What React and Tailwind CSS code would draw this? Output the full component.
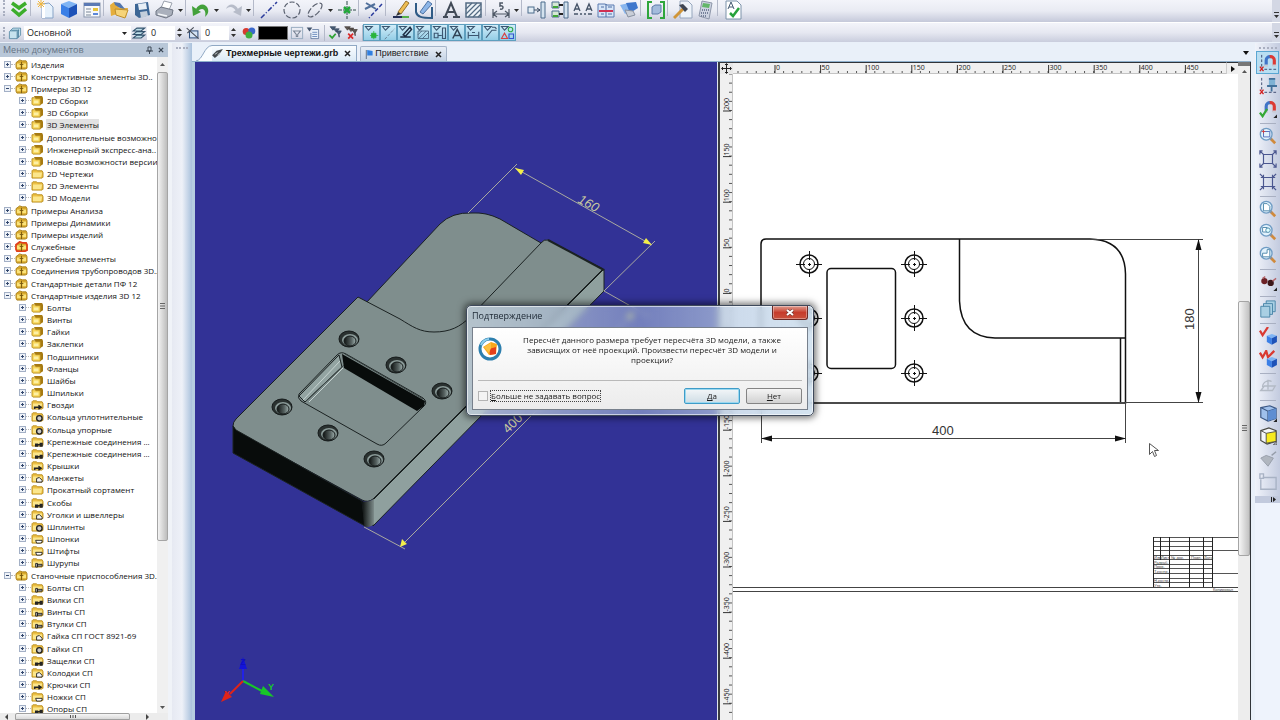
import React, { useState } from "react";
import clsx from "clsx";

const rootItems = [
  { name: "Изделия" },
  { name: "Конструктивные элементы 3D.." },
  {
    name: "Примеры 3D 12",
    children: [
      { name: "2D Сборки", icon: "box" },
      { name: "3D Сборки", icon: "box" },
      { name: "3D Элементы", icon: "box" },
      { name: "Дополнительные возможно", icon: "box" },
      { name: "Инженерный экспресс-ана..", icon: "box" },
      { name: "Новые возможности версии", icon: "box" },
      { name: "2D Чертежи", icon: "folder" },
      { name: "2D Элементы", icon: "folder" },
      { name: "3D Модели", icon: "folder" },
    ],
  },
  { name: "Примеры Анализа" },
  { name: "Примеры Динамики" },
  { name: "Примеры изделий" },
  { name: "Служебные", marked: true },
  { name: "Служебные элементы" },
  { name: "Соединения трубопроводов 3D.." },
  { name: "Стандартные детали ПФ 12" },
  {
    name: "Стандартные изделия 3D 12",
    children: [
      { name: "Болты", icon: "box" },
      { name: "Винты", icon: "box" },
      { name: "Гайки", icon: "box" },
      { name: "Заклепки", icon: "box" },
      { name: "Подшипники", icon: "box" },
      { name: "Фланцы", icon: "box" },
      { name: "Шайбы", icon: "box" },
      { name: "Шпильки", icon: "box" },
      { name: "Гвозди", icon: "nail" },
      { name: "Кольца уплотнительные", icon: "ring" },
      { name: "Кольца упорные", icon: "ring" },
      { name: "Крепежные соединения ...", icon: "joint" },
      { name: "Крепежные соединения ...", icon: "joint" },
      { name: "Крышки", icon: "nail" },
      { name: "Манжеты", icon: "part" },
      { name: "Прокатный сортамент", icon: "folder" },
      { name: "Скобы", icon: "joint" },
      { name: "Уголки и швеллеры", icon: "part" },
      { name: "Шплинты", icon: "ring" },
      { name: "Шпонки", icon: "key" },
      { name: "Штифты", icon: "key" },
      { name: "Шурупы", icon: "bolt" },
    ],
  },
  {
    name: "Станочные приспособления 3D.",
    children: [
      { name: "Болты СП", icon: "bolt" },
      { name: "Вилки СП", icon: "joint" },
      { name: "Винты СП", icon: "bolt" },
      { name: "Втулки СП", icon: "bolt" },
      { name: "Гайка СП ГОСТ 8921-69", icon: "part" },
      { name: "Гайки СП", icon: "ring" },
      { name: "Защелки СП", icon: "joint" },
      { name: "Колодки СП", icon: "part" },
      { name: "Крючки СП", icon: "nail" },
      { name: "Ножки СП", icon: "key" },
      { name: "Опоры СП", icon: "joint" },
    ],
  },
];

// flat list of the visible rows
const rows = rootItems.flatMap((item) => [
  { ...item, level: 0 },
  ...(item.children || []).map((child) => ({ ...child, level: 1 })),
]);

const Svg = ({ children, className = "size-5" }) => (
  <svg viewBox="0 0 20 20" fill="none" className={clsx("shrink-0", className)} aria-hidden="true">
    {children}
  </svg>
);

const Magnifier = ({ children }) => (
  <>
    <path d="M12.500 12.500L18 18" stroke="#d08a3c" strokeWidth="3" />
    <path d="M12 12l2 2" stroke="#8a8f9a" strokeWidth="2" />
    <circle cx="8" cy="8" r="6.500" fill="#e2f2fc" stroke="#6f9cc4" strokeWidth="1.500" />
    {children}
  </>
);

const Cube = ({ x = 0, y = 0, s = 1 }) => (
  <g transform={`translate(${x} ${y}) scale(${s})`}>
    <path d="M1 4L9 1l8 3-8 4z" fill="#7fb4f4" />
    <path d="M1 4l8 4v10l-8-4z" fill="#3a7fe6" />
    <path d="M17 4l-8 4v10l8-4z" fill="#1d52b8" />
  </g>
);

const Magnet = () => (
  <>
    <path d="M8 13V7a4 4 0 0 1 5-4" stroke="#3f74c8" strokeWidth="3.500" />
    <path d="M12 3a4 4 0 0 1 5 4v6" stroke="#dc3a34" strokeWidth="3.500" />
    <path d="M6 13h4M15 13h4" stroke="#c7ccd6" strokeWidth="2.500" />
  </>
);

const SnapAxes = () => (
  <path d="M3 1v14M6 17h14" stroke="#333f66" strokeWidth="1" strokeDasharray="3 2" />
);

const RedCross = () => <path d="M1 14l4 5M5 14l-4 5" stroke="#d22020" strokeWidth="1.500" />;

const icons = {
  chevrons: (
    <path d="M3 3l7 5 7-5M3 9l7 6 7-6" stroke="#3cae2c" strokeWidth="3.500" />
  ),
  newDoc: (
    <>
      <path d="M6 4l7-1 4 4v11H6z" fill="#e6f1fb" stroke="#87a3c6" />
      <path d="M6 4h3v14H6z" fill="#fff" />
      <path d="M5 0v8M1 4h8M2 1l6 6M8 1L2 7" stroke="#f0b53a" />
    </>
  ),
  cube: <Cube x={1} y={0} />,
  form: (
    <>
      <rect x="2" y="3" width="16" height="14" fill="#f6f8fb" stroke="#8795ac" />
      <path d="M2 3h16v3H2z" fill="#5a79b4" />
      <path d="M4 9h5M4 12h5M4 15h5" stroke="#7b8797" />
      <rect x="11" y="8" width="5" height="3" fill="#e6c33b" />
      <rect x="11" y="13" width="5" height="2" fill="#5b87d8" />
    </>
  ),
  open: (
    <>
      <path d="M1 5l4-3 4 3 1 3h9l-2 9-9-3-6 2z" fill="#e5ae3c" />
      <path d="M6 9l13 1-3 8-9-3z" fill="#f6d479" stroke="#c0902b" />
      <path d="M5 2l6 1 5 6-5-1-5-3z" fill="#5175ae" />
    </>
  ),
  save: (
    <>
      <path d="M3 4l13-2 2 13-11 3-4-3z" fill="#3c6695" />
      <path d="M6 4l8-1 1 6-8 1z" fill="#e8eff6" />
      <path d="M8 12l7-1 1 5-7 2z" fill="#c3cedb" />
    </>
  ),
  print: (
    <>
      <path d="M6 8l3-7 8 2-3 7z" fill="#fff" stroke="#9aa1ad" />
      <path d="M1 11l5-4 12 3-1 5-6 3-10-3z" fill="#aab0bc" stroke="#6f7683" />
      <path d="M3 14l9 2" stroke="#f2f4f7" strokeWidth="1.500" />
    </>
  ),
  undo: (
    <>
      <path d="M5 9C8 3 15 3 17 9c1 4-1 6-3 8 1-4 0-8-3-8-2 0-3 1-4 2" fill="#43a13a" />
      <path d="M1 6l1 10 8-4z" fill="#43a13a" />
    </>
  ),
  redo: (
    <>
      <path d="M15 9C12 3 5 3 3 9c3-3 7-3 10 2" fill="#b7bcc9" />
      <path d="M19 6l-1 10-8-4z" fill="#b7bcc9" />
    </>
  ),
  line: <path d="M2 18L18 2" stroke="#2b3c9c" strokeWidth="1.500" strokeDasharray="5 2 1 2" />,
  circle: <circle cx="10" cy="10" r="8" stroke="#5b6270" strokeWidth="1.200" strokeDasharray="5 2" />,
  ellipse: (
    <ellipse cx="10" cy="10" rx="9" ry="4" transform="rotate(-45 10 10)" stroke="#5c6270" strokeWidth="1.200" strokeDasharray="6 2" />
  ),
  node: (
    <>
      <path d="M10 1v18M1 10h18" stroke="#2c4b46" strokeDasharray="4 1" />
      <path d="M7 7l6 6M13 7l-6 6" stroke="#22a83a" strokeWidth="2.500" />
    </>
  ),
  trim: (
    <>
      <path d="M2 3l10 6M1 9l10-5" stroke="#51709b" strokeWidth="2" />
      <path d="M18 4L5 18" stroke="#2b3c9c" strokeWidth="1.500" strokeDasharray="4 2" />
    </>
  ),
  pencil: (
    <>
      <path d="M7 12L15 1l3 2-8 11z" fill="#eebd52" stroke="#96712c" />
      <path d="M7 12l3 2-5 2z" fill="#333" />
      <path d="M2 17h9" stroke="#222e55" strokeWidth="2" />
      <path d="M11 17h7" stroke="#54b04a" strokeWidth="2" />
    </>
  ),
  sketch: (
    <>
      <path d="M2 3v9c1 5 6 6 16 6V7" stroke="#2f5b86" strokeWidth="2" />
      <path d="M6 12L14 1l4 3-9 10z" fill="#8db6e8" stroke="#4e73a4" />
    </>
  ),
  textA: <path d="M2 17h5M12 17h7M4 17L10 3l6 14M7 12h7" stroke="#414a57" strokeWidth="2" />,
  hatch: (
    <>
      <rect x="2" y="3" width="15" height="14" fill="#edf3f8" stroke="#536b83" strokeWidth="1.500" />
      <path d="M2 9l6-6M2 14L13 3M4 17L17 4M9 17l8-8M14 17l3-3" stroke="#536b83" strokeWidth="1.200" />
    </>
  ),
  dimension: (
    <>
      <path d="M2 9v9M18 9v9M2 14h16M6 11l-4 3 4 3M14 11l4 3-4 3" stroke="#4e5866" strokeWidth="1.200" />
      <path d="M12 3H9v3c4-1 4 4 0 3" stroke="#4e5866" strokeWidth="1.500" />
    </>
  ),
  link: (
    <>
      <rect x="1" y="7" width="6" height="6" fill="#e3edf5" stroke="#4d6c8c" />
      <path d="M7 10h6M10 8l3 2-3 2" stroke="#394a60" />
      <path d="M14 2h4v16h-4z" fill="#d3e2ee" stroke="#4d6c8c" />
    </>
  ),
  linkGroup: (
    <>
      <path d="M2 2h7v6H2zM2 11h7v6H2z" fill="#d5e9d4" stroke="#4d6c8c" />
      <path d="M3 7h5M3 16h5" stroke="#41a637" strokeWidth="2" />
      <path d="M9 5h4M9 14h4" stroke="#222" strokeWidth="2" />
      <path d="M14 2h4v16h-4z" fill="#d3e2ee" stroke="#4d6c8c" />
    </>
  ),
  textLink: (
    <path d="M1 11l3-7 3 7M2 9h4M13 11l3-7 3 7M14 9h4M1 14h4M7 14h2M11 14h2M15 14h4" stroke="#465468" strokeWidth="1.300" />
  ),
  book: (
    <>
      <path d="M2 4h7l2 1h7v12H2z" fill="#d7e5f7" stroke="#5a7bb0" />
      <path d="M10 4v13M5 7h3M12 7h4M5 14h3M12 14h4" stroke="#4d6ca3" />
      <path d="M3 11h14" stroke="#d02f52" strokeWidth="2" />
    </>
  ),
  disks: (
    <>
      <path d="M1 5l9-2 3 8-7 3z" fill="#89b6ee" />
      <path d="M7 3l10-1 2 6-8 5z" fill="#3f77cc" />
      <path d="M6 10l8 1 2 4-7 2z" fill="#c9ced8" stroke="#8891a0" />
    </>
  ),
  bracket: (
    <>
      <path d="M6 2H2v16h4M14 2h4v16h-4" stroke="#2fa63c" strokeWidth="2" />
      <path d="M6 7l3-2h6v7l-3 2H6z" fill="#a3bbdc" stroke="#5d7ba8" />
    </>
  ),
  hammer: (
    <>
      <path d="M7 1h8l4 4v13H7z" fill="#eef3fa" stroke="#96a6bd" />
      <path d="M1 18l9-9" stroke="#d09538" strokeWidth="3" />
      <path d="M6 5l6 7 3-3-5-5z" fill="#3f4654" />
    </>
  ),
  calculator: (
    <>
      <path d="M6 1l10 2-3 16-10-3z" fill="#cdd3e1" stroke="#8d96a9" />
      <path d="M7 3l7 1-1 4-7-1z" fill="#63b66a" />
      <path d="M6 10h7M5 13h7M5 16h6" stroke="#76819a" strokeDasharray="1 1" strokeWidth="2" />
    </>
  ),
  checkDoc: (
    <>
      <path d="M3 1h11l4 4v14H3z" fill="#fff" stroke="#7d93aa" />
      <path d="M5 9l3-7 3 7M6 7h4" stroke="#445a71" />
      <path d="M7 13l3 3 6-8" stroke="#27a23b" strokeWidth="2.500" />
    </>
  ),
  layerBox: (
    <path d="M2 8l5-5h11v10l-5 5H2zM5 6h11M13 18V8M15 16V5M3 7h11v10" fill="#c7e2ee" stroke="#3f7796" />
  ),
  sheets: (
    <path d="M2 17h11l5-4H7zM2 12h11l5-4H7zM2 7h11l5-4H7z" fill="#bfe0ea" stroke="#34546f" strokeWidth="1.500" />
  ),
  priority: (
    <>
      <rect x="5" y="7" width="12" height="10" fill="#d4e3f4" stroke="#33527f" strokeWidth="1.500" />
      <path d="M1 3l17 15M2 10l9-8" stroke="#464b55" strokeWidth="1.500" />
    </>
  ),
  balls: (
    <>
      <circle cx="6" cy="8" r="5" fill="#d83b30" />
      <circle cx="14" cy="7" r="5" fill="#3a68cc" />
      <circle cx="10" cy="13" r="5" fill="#3fae3e" />
    </>
  ),
  filter: (
    <>
      <rect x="2" y="2" width="16" height="16" stroke="#9db0c3" strokeWidth="1.500" />
      <path d="M5 7h10l-4 5v3H9v-3z" stroke="#7a8595" strokeWidth="1.500" />
    </>
  ),
  filterList: (
    <>
      <path d="M1 2h8L5 8z" fill="#42526a" />
      <path d="M9 5h9v13H7V10" fill="#eaf1fa" stroke="#4a6590" />
      <path d="M9 9h7M9 12h7M9 15h7" stroke="#4168a9" />
    </>
  ),
  filterOk: (
    <>
      <path d="M3 1h8l-4 5zM8 4h8l-4 5zM12 7h7l-3 5v4l-1-4z" fill="#495d76" stroke="#33455c" />
      <path d="M2 13l4 4 5-6" stroke="#2fa334" strokeWidth="2.500" />
    </>
  ),
  filterNo: (
    <>
      <path d="M1 1h8L5 6zM6 3h8l-4 5zM11 5h8l-3 5v4l-1-4z" fill="#5c5450" stroke="#453e3b" />
      <path d="M6 11l7 7M13 11l-7 7" stroke="#d82a2a" strokeWidth="2.500" />
    </>
  ),
  magnetAxes: (
    <>
      <SnapAxes />
      <Magnet />
      <RedCross />
    </>
  ),
  pin: (
    <>
      <SnapAxes />
      <path d="M11 2h7v7h-7z" fill="#7fb2d4" />
      <path d="M11 2h7M9 10h11M14 10v6" stroke="#41719b" strokeWidth="2" />
      <RedCross />
    </>
  ),
  magnetOk: (
    <>
      <Magnet />
      <path d="M1 14l3 4 5-8" stroke="#35a936" strokeWidth="2.500" />
      <path d="M20 16v4h-4z" fill="#222" />
    </>
  ),
  zoomFrame: (
    <Magnifier>
      <path d="M5 5h7v6H5z" stroke="#4a65b8" />
      <path d="M3 5h4M5 3v4" stroke="#d04040" />
    </Magnifier>
  ),
  expand: (
    <path d="M5 5h10v10H5zM5 5L1 1M15 5l4-4M5 15l-4 4M15 15l4 4M1 5V1h3M16 1h3v4M1 15v4h3M19 15v4h-3" stroke="#4b5790" strokeWidth="1.300" />
  ),
  shrink: (
    <path d="M5 5h10v10H5zM1 1l4 4M19 1l-4 4M1 19l4-4M19 19l-4-4M2 5h3V2M15 2v3h3M2 15h3v3M18 15h-3v3" stroke="#4b5790" strokeWidth="1.300" />
  ),
  zoomPage: (
    <Magnifier>
      <path d="M5 4h4l3 3v5H5z" fill="#fff" stroke="#4a85a8" />
    </Magnifier>
  ),
  zoomObjects: (
    <Magnifier>
      <path d="M4 5h5v5H4z" fill="#fff" stroke="#4a85a8" />
      <circle cx="10" cy="8" r="2.500" fill="#dff" stroke="#4a85a8" />
    </Magnifier>
  ),
  zoomPrev: (
    <Magnifier>
      <path d="M9 4h3v8H4V8h5z" fill="#fff" stroke="#4a85a8" />
    </Magnifier>
  ),
  glasses: (
    <>
      <circle cx="6" cy="9" r="3.500" fill="#6b2025" />
      <circle cx="13" cy="11" r="3.500" fill="#3c1719" />
      <path d="M4 6l3-2M15 9l4-3" stroke="#b4656a" strokeWidth="1.500" />
      <path d="M20 16v4h-4z" fill="#222" />
    </>
  ),
  stack: (
    <>
      <path d="M8 1h10v12H8z" fill="#a9cfe3" stroke="#4582a6" />
      <path d="M5 4h10v12H5z" fill="#a9cfe3" stroke="#4582a6" />
      <path d="M2 7h10v12H2z" fill="#a9cfe3" stroke="#4582a6" />
    </>
  ),
  cubeCheck: (
    <>
      <path d="M1 4l3 5L10 0" stroke="#d93a32" strokeWidth="2.500" />
      <Cube x={8} y={7} s={0.7} />
    </>
  ),
  cubeChecks: (
    <>
      <path d="M1 3l3 5 4-7 2 7 7-7" stroke="#d93a32" strokeWidth="2.500" />
      <Cube x={8} y={7} s={0.7} />
    </>
  ),
  plane: (
    <path d="M2 15l4-5h12l-3 5zM4 11c0-6 7-8 10-6M10 14V3" stroke="#b3bac5" strokeWidth="1.500" />
  ),
  wireCube: (
    <>
      <path d="M2 4l10-2 7 3v11l-9 3-8-4z" fill="#9fc0ec" stroke="#3b5784" strokeWidth="1.300" />
      <path d="M2 4l8 4 9-3M10 8v11" stroke="#3b5784" strokeWidth="1.300" />
      <path d="M10 8l9-3v11l-9 3z" fill="#5f8ed2" />
      <path d="M20 16v4h-4z" fill="#222" />
    </>
  ),
  yellowCube: (
    <>
      <path d="M2 4l9-3 8 3v12l-10 3-7-4z" fill="#f4f6f9" stroke="#4a4a44" strokeWidth="1.300" />
      <path d="M8 7l11-2v11L8 18z" fill="#f7ea1e" stroke="#4a4a44" />
      <path d="M2 4l6 3M20 16v4h-4z" stroke="#4a4a44" />
    </>
  ),
  grayBody: (
    <>
      <path d="M2 9l6-3 8 3-6 9z" fill="#b0b6bf" stroke="#959ca8" />
      <path d="M14 6l5-4" stroke="#959ca8" strokeWidth="1.500" />
    </>
  ),
  frame: (
    <path d="M4 5h15v13H2V7M1 1h4v5H1z" stroke="#a8b2c4" strokeWidth="1.500" />
  ),
};

const mainTools = [
  ["chevrons", "Завершить"], "sep",
  ["newDoc", "Новый чертеж"], ["cube", "Новая 3D модель"], ["form", "Новый документ"], "sep",
  ["open", "Открыть"], ["save", "Сохранить"], ["print", "Печать"], "more", "sep",
  ["undo", "Отменить"], "more", ["redo", "Повторить"], "more", "sep",
  ["line", "Прямая"], ["circle", "Окружность"], ["ellipse", "Эллипс"], "more", ["node", "Узел"], "sep",
  ["trim", "Обрезка"], "sep",
  ["pencil", "Изображение"], ["sketch", "Эскиз"], "sep",
  ["textA", "Текст"], ["hatch", "Штриховка"], "sep",
  ["dimension", "Размер"], "more", "sep",
  ["link", "Связь"], ["linkGroup", "Группа связей"], ["textLink", "Связь текста"], ["book", "Библиотека"], ["disks", "База данных"], "sep",
  ["bracket", "Фрагмент"], "sep",
  ["hammer", "Настройка"], ["calculator", "Калькулятор"], "sep",
  ["checkDoc", "Проверка"],
];

const sideTools = [
  ["magnetAxes", "Привязки"], ["pin", "Закрепить"], ["magnetOk", "Объектная привязка"], "sep",
  ["zoomFrame", "Показать рамкой"], ["expand", "Увеличить"], ["shrink", "Уменьшить"], "sep",
  ["zoomPage", "Показать страницу"], ["zoomObjects", "Показать объекты"], ["zoomPrev", "Предыдущий вид"], "sep",
  ["glasses", "Видимость"], "sep",
  ["stack", "Слои"], "sep",
  ["cubeCheck", "Пересчитать"], ["cubeChecks", "Полный пересчет"], "sep",
  ["plane", "Рабочая плоскость"], "sep",
  ["wireCube", "Прозрачность"], ["yellowCube", "Закраска"], ["grayBody", "Тело"], ["frame", "Рамка"],
];

const selectors = [
  ["Узлы", <path key="a" d="M10 11h6v6h-6zM13 8v11M8 14h11" fill="#28b43c" stroke="#28b43c" />],
  ["Линии", <path key="b" d="M5 19L18 5" stroke="#5b6e80" strokeDasharray="4 2" />],
  ["Изображения", <path key="c" d="M3 16h14M7 13L16 3l2 3-8 9z" stroke="#1d2d44" strokeWidth="2" />],
  ["Штриховки", <path key="d" d="M4 8h14v10H4zM4 13l5-5M5 18L15 8M10 18l8-8" stroke="#3b5670" />],
  ["Связи", <path key="e" d="M3 11h5v6H3zM8 14h5M14 4h4v14h-4z" stroke="#3b5670" strokeWidth="1.500" />],
  ["Тексты", <path key="f" d="M5 18l6-12 6 12M7 14h8" stroke="#2f4355" strokeWidth="2" />],
  ["Размеры", <path key="g" d="M3 9v9M17 9v9M3 14h14M8 10h4" stroke="#3b5670" strokeWidth="1.500" />],
  ["Надписи", <path key="h" d="M4 17L12 7h6M12 3h4l2 2" stroke="#3b5670" strokeWidth="1.500" />],
  [
    "Операции",
    <g key="i" strokeWidth="1.500">
      <circle cx="14" cy="6" r="3" stroke="#2fa848" />
      <path d="M2 18l4-7 4 7z" stroke="#d84040" />
      <path d="M12 12h6v6h-6z" stroke="#3355d0" />
    </g>,
  ],
];

const Separator = () => <span className="h-4 w-1 shrink-0 border-l border-[#b4b9c9]" />;

const DropArrow = ({ label }) => (
  <button aria-label={label} className="flex h-5 w-[9px] items-center justify-center">
    <svg viewBox="0 0 5 3" className="w-[5px]">
      <path d="M0 0h5L2.500 3z" fill="#2b2b2b" />
    </svg>
  </button>
);

const ToolbarEnd = () => (
  <span className="ml-auto flex h-full w-2 items-end justify-center bg-[#d3d7e4] pb-1">
    <svg viewBox="0 0 5 6" className="w-[5px]">
      <path d="M0 0h5v1H0zM0 3h5L2.500 6z" fill="#333" />
    </svg>
  </span>
);

const MainToolbar = () => (
  <div className="flex h-[23px] shrink-0 items-start border-b border-white bg-linear-to-b from-[#f3f4fa] via-[#e9ebf3] to-[#c5c9da] pl-[3px]">
    <span className="mr-[2px] h-4 w-[2px] border-l-2 border-dotted border-[#a9afc0]" />
    {mainTools.map((tool, index) => {
      if (tool === "sep") return <Separator key={index} />;
      if (tool === "more") return <DropArrow key={index} label="Ещё" />;
      return (
        <button key={index} aria-label={tool[1]} className="flex w-[23px] justify-center">
          <Svg>{icons[tool[0]]}</Svg>
        </button>
      );
    })}
    <ToolbarEnd />
  </div>
);

const Spinner = () => (
  <svg viewBox="0 0 5 9" className="mx-[2px] w-[5px] shrink-0" aria-hidden="true">
    <path d="M0 3h5L2.500 0zM0 6h5L2.500 9z" fill="#333" />
  </svg>
);

const LayerToolbar = () => (
  <div className="flex h-[19px] shrink-0 items-center bg-linear-to-b from-[#f3f4fa] via-[#e6e8f1] to-[#c9cddd] pl-[3px] text-[9px] text-[#222] [font-family:'Open_Sans','Noto_Sans',sans-serif]">
    <span className="mr-[3px] h-3 w-[2px] border-l-2 border-dotted border-[#a9afc0]" />
    <Svg className="size-[14px]">{icons.layerBox}</Svg>
    <div className="relative ml-[2px] flex w-[107px]">
      <select aria-label="Слой" className="h-[14px] w-full appearance-none bg-white px-[3px] leading-[14px] outline-none">
        <option>Основной</option>
      </select>
      <svg viewBox="0 0 5 3" className="pointer-events-none absolute top-[6px] right-1 w-[5px]">
        <path d="M0 0h5L2.500 3z" fill="#222" />
      </svg>
    </div>
    <Svg className="ml-px size-[14px]">{icons.sheets}</Svg>
    <input aria-label="Уровень" defaultValue="0" className="ml-px h-[14px] w-7 bg-white px-1 outline-none" />
    <Spinner />
    <Svg className="ml-[2px] size-[14px]">{icons.priority}</Svg>
    <input aria-label="Приоритет" defaultValue="0" className="ml-px h-[14px] w-7 bg-white px-1 outline-none" />
    <Spinner />
    <button aria-label="Цвет" className="ml-1 flex">
      <Svg className="size-[14px]">{icons.balls}</Svg>
    </button>
    <button aria-label="Текущий цвет" className="ml-[2px] h-[14px] w-[30px] border border-[#777] bg-black" />
    <button aria-label="Фильтр" className="ml-[2px] flex">
      <Svg className="size-[14px]">{icons.filter}</Svg>
    </button>
    <button aria-label="Список фильтров" className="mr-1 ml-[2px] flex">
      <Svg className="size-[14px]">{icons.filterList}</Svg>
    </button>
    <Separator />
    <button aria-label="Включить все" className="flex">
      <Svg className="size-[14px]">{icons.filterOk}</Svg>
    </button>
    <button aria-label="Выключить все" className="mr-1 ml-[2px] flex">
      <Svg className="size-[14px]">{icons.filterNo}</Svg>
    </button>
    <span className="h-4 w-px shrink-0 bg-[#b4b9c9]" />
    {selectors.map(([label, glyph]) => (
      <button
        key={label}
        aria-label={label}
        className="flex h-[17px] w-[17px] items-center justify-center border border-[#5e9fbe] bg-linear-to-b from-[#d2edf9] to-[#93cde6]"
      >
        <Svg className="size-[15px]">
          <path d="M2 2h9L6 7z" stroke="#3b5670" strokeWidth="1.500" />
          {glyph}
        </Svg>
      </button>
    ))}
    <ToolbarEnd />
  </div>
);

const RootFolder = ({ marked }) => (
  <svg viewBox="0 0 14 12" className="h-[11px] w-[13px] shrink-0" aria-hidden="true">
    <path d="M1 4l4-3 3 1h4l1 2v6l-2 1H2L1 9z" fill="#d9a92c" stroke={marked ? "#e0401c" : "#a9801c"} strokeWidth={marked ? 2 : 1} />
    <path d="M2 5h4v4H2zM8 5h4v4H8z" fill="#fbe37a" />
    <path d="M7 3v8M5 6h4" stroke="#77590f" />
  </svg>
);

const partMarks = {
  nail: <path d="M3 9h7M4 9v2M8 7l3 2-3 2" stroke="#222" strokeWidth="1.500" fill="none" />,
  ring: <circle cx="9" cy="8" r="3" stroke="#222" strokeWidth="1.500" fill="#c9c9c9" />,
  joint: <path d="M5 9h2v2H5zM10 8h2v3h-2zM6 9l5 1" stroke="#222" strokeWidth="1.500" fill="#333" />,
  part: <path d="M6 11V7l3-1 3 3v2z" stroke="#222" fill="#f4f4f4" />,
  key: <path d="M5 8h7v2l-2 1H6z" stroke="#222" fill="#fff" />,
  bolt: <path d="M5 7h2v4H5zM7 8h5v2H7z" stroke="#222" fill="#b5b5b5" />,
};

const ChildFolder = ({ icon }) => (
  <svg viewBox="0 0 14 12" className="h-[11px] w-[13px] shrink-0" aria-hidden="true">
    {icon === "box" ? (
      <>
        <path d="M3 1h9l1 2v6l-3 2z" fill="#a67a12" />
        <path d="M1 3h3l1 1h5v7H2L1 10z" fill="#f8d65a" stroke="#b88c1e" />
        <path d="M3 6h5v3H3z" fill="#fdf0a4" />
      </>
    ) : (
      <>
        <path d="M1 3l1-1h4l1 1h5l1 2v5l-1 1H1z" fill="#edc044" stroke="#b88c1e" />
        <path d="M2 5h10l-1 5H2z" fill="#fbe68c" />
        {partMarks[icon]}
      </>
    )}
  </svg>
);

const Grip = () => (
  <svg viewBox="0 0 5 7" className="h-[7px] w-[5px]" stroke="#666">
    <path d="M0 .5h5M0 3h5M0 5.500h5" />
  </svg>
);

const ScrollArrow = ({ d, className }) => (
  <button aria-label="Прокрутка" className={clsx("flex w-full shrink-0 items-center justify-center", className)}>
    <svg viewBox="0 0 5 3" className="w-[5px]">
      <path d={d} fill="#555" />
    </svg>
  </button>
);

const DocumentTree = () => {
  const [selected, setSelected] = useState("3D Элементы");

  return (
    <aside className="flex w-[168px] shrink-0 flex-col bg-white">
      <div className="flex h-[14px] shrink-0 items-center bg-[#b8c7d8] pr-1 pl-[3px] text-[9px] text-[#657484] [font-family:'Open_Sans','Noto_Sans',sans-serif]">
        <h2 className="flex-1">Меню документов</h2>
        <button aria-label="Закрепить панель" className="mr-[5px]">
          <svg viewBox="0 0 7 8" className="w-[7px]" fill="none" stroke="#3c4856">
            <path d="M2 1h3v4H2zM0 5h7M3.500 5v3" />
          </svg>
        </button>
        <button aria-label="Закрыть панель">
          <svg viewBox="0 0 7 7" className="w-[6px]" fill="none" stroke="#3c4856" strokeWidth="1.500">
            <path d="M1 1l5 5M6 1L1 6" />
          </svg>
        </button>
      </div>
      <div className="flex min-h-0 flex-1">
        <ul className="grid h-[658px] min-w-0 flex-1 auto-rows-fr overflow-hidden pt-px text-[8px] leading-[11px] whitespace-nowrap text-[#111] [font-family:'Open_Sans','Noto_Sans',sans-serif]">
          {rows.map((row, index) => (
            <li key={index} className={clsx("flex min-h-0 min-w-0 items-center", row.level ? "pl-[19px]" : "pl-1")}>
              <button
                aria-label={row.children ? "Свернуть" : "Развернуть"}
                className="flex size-[7px] shrink-0 items-center justify-center border border-[#a3b0c6] bg-[#eef2f8]"
              >
                <svg viewBox="0 0 5 5" className="size-[5px]" stroke="#33486e">
                  <path d={row.children ? "M1 2.500h3" : "M1 2.500h3M2.500 1v3"} />
                </svg>
              </button>
              <span className={clsx("h-px shrink-0 border-t border-dotted border-[#b9b9b9]", row.level ? "w-[5px]" : "w-1")} />
              {row.level ? <ChildFolder icon={row.icon} /> : <RootFolder marked={row.marked} />}
              <button
                onClick={() => setSelected(row.name)}
                className={clsx(
                  "ml-[2px] shrink-0 pl-px text-left",
                  row.level && selected === row.name && "bg-[#e2e2e2]"
                )}
              >
                {row.name}
              </button>
            </li>
          ))}
        </ul>
        <div className="flex w-[11px] shrink-0 flex-col bg-[#f0f0f0]">
          <ScrollArrow d="M0 3h5L2.500 0z" className="h-[15px]" />
          <div className="flex h-[469px] items-center justify-center rounded-[2px] border border-[#a5a5a5] bg-linear-to-r from-[#f4f4f4] to-[#bdbdbd]">
            <Grip />
          </div>
          <div className="flex-1" />
          <ScrollArrow d="M0 0h5L2.500 3z" className="h-[11px]" />
        </div>
      </div>
      <div className="flex h-[7px] shrink-0 bg-[#ececec] pl-1">
        <svg viewBox="0 0 4 6" className="mt-px mr-[7px] h-[6px] w-1">
          <path d="M4 0v6L1 3z" fill="#444" />
        </svg>
        <div className="flex w-[115px] justify-center rounded-t-[2px] border border-[#a0a0a0] bg-linear-to-b from-[#f6f6f6] to-[#d9d9d9]">
          <svg viewBox="0 0 6 4" className="h-1 w-[6px]" stroke="#555">
            <path d="M.5 1v3M3 1v3M5.500 1v3" />
          </svg>
        </div>
        <svg viewBox="0 0 4 6" className="mt-px ml-4 h-[6px] w-1">
          <path d="M0 0v6l3-3z" fill="#444" />
        </svg>
      </div>
    </aside>
  );
};

const CloseMark = ({ label }) => (
  <button aria-label={label} className="ml-[6px]">
    <svg viewBox="0 0 7 7" className="w-[7px]" fill="none" stroke="#222" strokeWidth="1.500">
      <path d="M1 1l5 5M6 1L1 6" />
    </svg>
  </button>
);

const Tabs = () => (
  <div className="flex h-[19px] shrink-0 items-end border-b border-[#8fb0cc] bg-[#e9f0f9] pl-1 text-[9px] [font-family:'Liberation_Sans',Arial,sans-serif]">
    <svg viewBox="0 0 16 16" className="h-4 w-4 shrink-0">
      <path d="M0 16C7 15 8 1 16 .5V16z" fill="#fafdff" />
      <path d="M0 16C7 15 8 1 16 .5" fill="none" stroke="#8fa8c4" />
    </svg>
    <div className="flex h-4 items-center border-t border-r border-[#8fa8c4] bg-linear-to-b from-[#fafdff] to-[#dbeaf6] pr-[5px]">
      <svg viewBox="0 0 12 10" className="h-[9px] w-[11px]">
        <path d="M0 7l5-5 7-2-4 6-5 4z" fill="#42484c" />
        <path d="M3 6l3-2M6 7l3-3" stroke="#cfd6d8" />
      </svg>
      <button className="ml-[3px] font-bold text-[#111]">Трехмерные чертежи.grb</button>
      <CloseMark label="Закрыть чертеж" />
    </div>
    <div className="ml-[3px] flex h-[15px] items-center rounded-t-[2px] border border-b-0 border-[#a5b4c8] bg-linear-to-b from-[#e8eef6] to-[#c3d2e4] px-1">
      <svg viewBox="0 0 8 10" className="h-[9px] w-2">
        <path d="M1 0v10" stroke="#55657a" />
        <path d="M2 0l6 1v5L2 6z" fill="#2f7fe0" />
      </svg>
      <button className="ml-[2px] text-[#222]">Приветствие</button>
      <CloseMark label="Закрыть приветствие" />
    </div>
    <button aria-label="Список вкладок" className="mr-[2px] mb-[6px] ml-auto">
      <svg viewBox="0 0 6 4" className="w-[6px]">
        <path d="M0 0h6L3 4z" fill="#111" />
      </svg>
    </button>
  </div>
);

const modelHoles = [
  [349, 339], [396, 365], [442, 391], [282, 407], [328, 433], [374, 459],
];

const ModelView = () => (
  <svg viewBox="195 62 522 658" preserveAspectRatio="xMinYMin slice" className="h-full min-w-0 flex-1 bg-[#323296]">
    <defs>
      <linearGradient id="corner" x1="0" x2="1">
        <stop offset="0" stopColor="#0a0e0d" />
        <stop offset="1" stopColor="#7d8b8a" />
      </linearGradient>
      <linearGradient id="bore" x1="0" x2="1">
        <stop offset="0" stopColor="#0e1211" />
        <stop offset="0.600" stopColor="#55605f" />
        <stop offset="1" stopColor="#9fb0ae" />
      </linearGradient>
    </defs>

    {/* faces */}
    <g stroke="#1b2222" strokeLinejoin="round">
      <path d="M366 303L440 224Q452 212 472 213Q486 212 500 219L541 243L560 330L430 340z" fill="#7f8e8d" />
      <path d="M233 426Q233 422 236 419L358 297L400 319C413 327 420 332 434 332C450 332 460 327 470 317L541 243Q544 239 548 240L603 269L373 499Q368 503 362 500L236 431z" fill="#7f8e8d" />
      <path d="M373 500L604 269V291L373 526z" fill="#8fa09e" />
      <path d="M233 426L236 430L362 501L365 526L233 453z" fill="#080c0b" />
      <path d="M362 501Q368 503 374 499V524Q369 529 364 526z" fill="url(#corner)" stroke="none" />
      <path d="M548 240L604 270" strokeWidth="2" />
    </g>

    {/* pocket */}
    <g strokeLinejoin="round">
      <path d="M299 394L337 355Q341 351 346 354L423 398Q428 402 424 406L386 443Q382 447 377 444L301 401Q297 398 299 394z" fill="#7f8e8d" stroke="#1b2222" />
      <path d="M342 354L425 401L424 406L417 411L344 368z" fill="#080c0b" />
      <path d="M299 396L339 355L342 367L305 402z" fill="#93a4a2" stroke="#1b2222" />
      <path d="M303 400L340 361M309 402L343 368" stroke="#c6d3d1" />
      <path d="M306 401L344 365M345 354L423 399" stroke="#3a4443" fill="none" />
    </g>

    {modelHoles.map(([x, y]) => (
      <g key={`${x}-${y}`}>
        <ellipse cx={x} cy={y} rx="10" ry="8" fill="#2a3130" stroke="#151a1a" />
        <ellipse cx={x + 1} cy={y + 1} rx="8" ry="6" fill="#8a9a98" />
        <ellipse cx={x + 1} cy={y + 2} rx="6" ry="5" fill="url(#bore)" stroke="#151a1a" />
      </g>
    ))}

    {/* dimensions */}
    <g stroke="#a9a9a0" strokeWidth="1">
      <path d="M468 213L517 164M604 291L655 241M515 168L652 245M604 291L650 317M364 527L405 549M400 547L634 313" fill="none" />
    </g>
    <g fill="#f3ee4a">
      <path d="M515 168l9 2-3 5zM652 245l-9-2 3-5zM400 547l2-8 5 5zM634 313l-8 2 5 5z" />
    </g>
    <g fill="#c9c9a0" fontSize="13" className="[font-family:'Liberation_Sans',Arial,sans-serif]">
      <text transform="translate(577 202) rotate(29)" fontStyle="italic">160</text>
      <text transform="translate(508 434) rotate(-45)">400</text>
    </g>

    {/* axes */}
    <g strokeWidth="2">
      <path d="M243 681V668" stroke="#2222e8" />
      <path d="M243 681l19 10" stroke="#18c828" />
      <path d="M243 681l-13 13" stroke="#e02418" />
      <path d="M239 669l4-12 4 12z" fill="#1414d8" />
      <path d="M263 686l11 11-14-3z" fill="#18c828" />
      <path d="M221 702l5-11 6 6z" fill="#e02418" />
    </g>
    <g fontSize="9" fontWeight="bold" className="[font-family:'Liberation_Sans',Arial,sans-serif]">
      <text x="240" y="665" fill="#1010c0">Z</text>
      <text x="268" y="690" fill="#18c828">Y</text>
      <text x="224" y="697" fill="#e02418">X</text>
    </g>
  </svg>
);

const hTicks = [0, 50, 100, 150, 200, 250, 300, 350, 400, 450];
const vTicks = [200, 150, 100, 50, 0, -50, -100, -150, -200, -250, -300, -350, -400, -450];
// one division is 50 units, 456/10 px on screen
const STEP = 456 / 10;

const HorizontalRuler = () => (
  <svg viewBox="733 62 493 12" preserveAspectRatio="xMinYMin slice" className="h-3 w-full bg-[#f0f0f0]">
    <path d="M733 62.500h493" stroke="#303338" />
    {Array.from({ length: 54 }, (_, i) => (
      <path key={i} d={`M${738 + (i * STEP) / 5} 71v2`} stroke="#555" />
    ))}
    {hTicks.map((value, i) => (
      <g key={value}>
        <path d={`M${775 + i * STEP} 65v8`} stroke="#333" />
        <text x={776 + i * STEP} y="70" fontSize="7" fill="#222" className="[font-family:'Open_Sans','Noto_Sans',sans-serif]">
          {value}
        </text>
      </g>
    ))}
    <path d="M733 73.500h493" stroke="#c4c4c4" />
  </svg>
);

const VerticalRuler = () => (
  <svg viewBox="720 74 13 646" preserveAspectRatio="xMinYMin slice" className="h-full w-[13px] bg-[#f0f0f0]">
    {Array.from({ length: 71 }, (_, i) => (
      <path key={i} d={`M729 ${74 + (i * STEP) / 5}h3`} stroke="#555" />
    ))}
    {vTicks.map((value, i) => (
      <g key={value}>
        <path d={`M723 ${111 + i * STEP}h8`} stroke="#333" />
        <text
          transform={`translate(729 ${110 + i * STEP}) rotate(-90)`}
          fontSize="7"
          fill="#222"
          className="[font-family:'Open_Sans','Noto_Sans',sans-serif]"
        >
          {value}
        </text>
      </g>
    ))}
    <path d="M732.500 74v646" stroke="#c4c4c4" />
  </svg>
);

const planHoles = [
  [809, 264], [914, 264], [809, 318], [914, 318], [809, 373], [914, 373],
];

const Drawing = () => (
  <svg viewBox="733 74 505 646" preserveAspectRatio="xMinYMin slice" className="h-full w-full bg-white" fill="none">
    <g stroke="#111" strokeWidth="1.500">
      <path d="M761 403V244Q761 239 766 239H1090Q1125 240 1125.500 274V403z" />
      <path d="M959.500 239V301Q961 337 995 338H1125" />
      <rect x="827" y="268.500" width="68.500" height="100" rx="4" />
    </g>
    <path d="M1120.500 338v64" stroke="#111" strokeWidth="1.500" />

    {planHoles.map(([x, y]) => (
      <g key={`${x}-${y}`} stroke="#111">
        <circle cx={x} cy={y} r="9" strokeWidth="1.500" />
        <circle cx={x} cy={y} r="5.500" />
        <path d={`M${x - 13} ${y + 0.5}h9M${x - 1} ${y + 0.5}h3M${x + 5} ${y + 0.5}h8M${x + 0.5} ${y - 13}v9M${x + 0.5} ${y - 1}v3M${x + 0.5} ${y + 5}v8`} />
      </g>
    ))}

    {/* dimensions */}
    <path d="M1090 239.500H1203M1125 402.500H1203M1198.500 239V403M761.500 403V443M1125.500 403V443M761 438.500H1126" stroke="#444" />
    <path d="M1198.500 239l3 11h-6zM1198.500 403l3-11h-6zM761 438.500l11-3v6zM1126 438.500l-11-3v6z" fill="#111" />
    <g fill="#333" fontSize="13" className="[font-family:'Liberation_Sans',Arial,sans-serif]">
      <text x="932" y="435">400</text>
      <text transform="translate(1194 330) rotate(-90)">180</text>
    </g>

    {/* sheet frame and title block */}
    <path d="M733 587.500H1238M733 591.500H1238" stroke="#444" />
    <path
      d="M1153 537.500H1238M1212 550.500H1238M1212 573.500H1238M1153 541.500h60M1153 546.500h60M1153 550.500h60M1153 555.500h60M1153 559.500h60M1153 564.500h60M1153 568.500h60M1153 573.500h60M1153 578.500h60M1153 582.500h60"
      stroke="#555"
    />
    <path d="M1153.500 537v50M1160.500 537v23M1169.500 537v50M1189.500 537v50M1203.500 537v50M1212.500 537v50" stroke="#222" />
    <g fill="#444" fontSize="4" className="[font-family:'Liberation_Sans',Arial,sans-serif]">
      <text x="1154" y="559">Изм</text>
      <text x="1161" y="559">Лист</text>
      <text x="1171" y="559">№ док.</text>
      <text x="1191" y="559">Подп.</text>
      <text x="1204" y="559">Дата</text>
      <text x="1154" y="564">Разраб.</text>
      <text x="1154" y="568">Пров.</text>
      <text x="1154" y="573">Т.контр.</text>
      <text x="1154" y="582">Н.контр.</text>
      <text x="1154" y="587">Утв.</text>
      <text x="1213" y="591">Копировал</text>
    </g>

    {/* pointer */}
    <path d="M1149.500 443.500v11l3-3 2 5 2-1-2-5h4z" fill="#fff" stroke="#555" />
  </svg>
);

const DrawingView = () => (
  <div className="grid h-full min-w-0 flex-1 grid-cols-[13px_minmax(0,1fr)_12px_12px] grid-rows-[12px_minmax(0,1fr)] border-r border-[#303338]">
    <div className="flex items-center justify-center border-t border-[#303338] bg-[#e8e8e8]">
      <svg viewBox="0 0 11 11" className="size-[11px]" stroke="#222" fill="none">
        <path d="M5.500 1v9M1 5.500h9M4 2l1.500-1.500L7 2M4 9l1.500 1.500L7 9M2 4L.5 5.500 2 7M9 4l1.500 1.500L9 7" />
      </svg>
    </div>
    <HorizontalRuler />
    <button aria-label="Прокрутить линейку" className="flex items-center justify-center border-t border-l border-t-[#303338] border-l-[#ccc] bg-[#efefef]">
      <svg viewBox="0 0 4 6" className="h-[6px] w-1">
        <path d="M0 0v6l4-3z" fill="#111" />
      </svg>
    </button>
    <div className="border-t-4 border-[#777] bg-[#f0f0f0]">
      <ScrollArrow d="M0 3h5L2.500 0z" className="h-[11px]" />
    </div>
    <VerticalRuler />
    <div className="col-span-2 min-h-0 min-w-0">
      <Drawing />
    </div>
    <div className="bg-[#ededed] pt-[227px]">
      <div className="flex h-[255px] items-center justify-center rounded-[2px] border border-[#a5a5a5] bg-linear-to-r from-[#f6f6f6] to-[#c2c2c2]">
        <Grip />
      </div>
    </div>
  </div>
);

const SideToolbar = () => (
  <div className="ml-1 w-[25px] shrink-0 bg-[#eef3fc]">
    <div className="flex flex-col items-center bg-linear-to-r from-[#f0f3fa] to-[#c3cbdf] pt-1">
      <span className="mb-[2px] h-[2px] w-[18px] border-t-2 border-dotted border-[#a9afc0]" />
      {sideTools.map((tool, index) =>
        tool === "sep" ? (
          <span key={index} className="h-1 w-4 border-b border-[#a9b0c2]" />
        ) : (
          <button
            key={index}
            aria-label={tool[1]}
            className={clsx(
              "flex h-[23px] w-[23px] items-center justify-center",
              index === 0 && "border border-[#5aa6d2] bg-[#b9def2]"
            )}
          >
            <Svg className="size-[18px]">{icons[tool[0]]}</Svg>
          </button>
        )
      )}
      <span className="mt-[3px] flex h-[7px] w-full items-center justify-end bg-[#c2cadd] pr-1">
        <svg viewBox="0 0 5 5" className="w-[5px]">
          <path d="M0 0h1v5H0zM2 0v5l3-2.500z" fill="#222" />
        </svg>
      </span>
    </div>
  </div>
);

const ConfirmDialog = ({ onClose }) => (
  <div
    role="dialog"
    aria-labelledby="dialog-title"
    className="absolute top-[305px] left-[466px] w-[348px] rounded-[5px] border border-[#3f4a5c] bg-linear-to-r from-[#c2d0dc]/80 via-[#9fb3d6]/60 to-[#c9dcec]/80 px-[5px] pb-[5px] shadow-[0_0_7px_2px_rgba(0,0,0,0.55),inset_0_0_0_1px_rgba(255,255,255,0.6)] backdrop-blur-[3px] [font-family:'Open_Sans','Noto_Sans',sans-serif]"
  >
    <div className="flex h-[21px] items-start justify-between">
      <h1 id="dialog-title" className="pt-1 text-[9px] leading-[11px] text-[#1c2733]">
        Подтверждение
      </h1>
      <button
        aria-label="Закрыть"
        onClick={onClose}
        className="flex h-[14px] w-9 items-center justify-center rounded-b-[3px] border border-t-0 border-[#6b2a26] bg-linear-to-b from-[#dd9a8e] via-[#c63c2c] to-[#c9503c] shadow-[inset_0_0_0_1px_rgba(255,255,255,0.35)]"
      >
        <svg viewBox="0 0 8 7" className="w-2" fill="none">
          <path d="M1 1l6 5M7 1L1 6" stroke="#6a3530" strokeWidth="3" />
          <path d="M1 1l6 5M7 1L1 6" stroke="#fff" strokeWidth="2" />
        </svg>
      </button>
    </div>
    <div className="border border-[#77808c] bg-linear-to-b from-white to-[#ececec] px-[5px] pb-[5px] text-[8px] text-[#1a1a1a]">
      <div className="flex h-[53px] border-b border-[#b9b9b9] pt-[7px]">
        <svg viewBox="0 0 24 24" className="mt-[2px] size-6 shrink-0">
          <circle cx="12" cy="12" r="10" fill="#fff" stroke="#2d7fae" strokeWidth="3" />
          <path d="M3 8a10 10 0 0 1 8-6" stroke="#8fd0ee" strokeWidth="2" fill="none" />
          <path d="M5 10l8-5 6 2-1 10-7 1z" fill="#f7a81c" />
          <path d="M11 12l7-2v7l-6 1z" fill="#e5401c" />
          <path d="M6 10l7-4v5l-2 5z" fill="#fcc040" />
        </svg>
        <p className="mx-auto w-[270px] text-center leading-[10px]">
          Пересчёт данного размера требует пересчёта 3D модели, а также зависящих от неё проекций. Произвести пересчёт 3D модели и проекции?
        </p>
      </div>
      <div className="flex items-center pt-[7px]">
        <input id="dont-ask" type="checkbox" className="size-[10px] appearance-none border border-[#b4b4b4] bg-[#f4f4f4] checked:bg-[#6a8fc0]" />
        <label htmlFor="dont-ask" className="ml-[2px] border border-dotted border-[#444] leading-[10px]">
          <u>Б</u>ольше не задавать вопрос
        </label>
        <button onClick={onClose} className="ml-auto h-4 w-14 rounded-[2px] border border-[#3f9cc8] bg-linear-to-b from-[#f3f6f8] to-[#cfdde5] leading-[12px] shadow-[inset_0_0_0_1px_#9ad8f0]">
          <u>Д</u>а
        </button>
        <button onClick={onClose} className="ml-[6px] h-4 w-14 rounded-[2px] border border-[#848484] bg-linear-to-b from-[#f4f4f4] to-[#d2d2d2] leading-[12px]">
          <u>Н</u>ет
        </button>
      </div>
    </div>
  </div>
);

export default function App() {
  const [dialogOpen, setDialogOpen] = useState(true);

  return (
    <div className="relative flex h-screen flex-col overflow-hidden bg-[#e9f0f9]">
      <MainToolbar />
      <LayerToolbar />
      <div className="mt-px flex min-h-0 flex-1">
        <DocumentTree />
        <div className="flex w-6 shrink-0 justify-center border-l-4 border-[#f0f3f8] bg-linear-to-r from-[#e6e9f2] via-[#eef1f8] to-[#a9c1dc] pt-1">
          <span className="h-[2px] w-3 border-t-2 border-dotted border-[#a9afc0]" />
        </div>
        <main className="flex min-w-0 flex-1 flex-col">
          <Tabs />
          <div className="flex min-h-0 flex-1 border-l-[3px] border-[#b5cde0]">
            <div className="flex min-h-0 w-[522px] shrink-0">
              <ModelView />
            </div>
            <div className="w-[3px] shrink-0 border-r-2 border-[#3a3d42] bg-[#dfe6ee]" />
            <DrawingView />
          </div>
        </main>
        <SideToolbar />
      </div>
      {dialogOpen && <ConfirmDialog onClose={() => setDialogOpen(false)} />}
    </div>
  );
}
